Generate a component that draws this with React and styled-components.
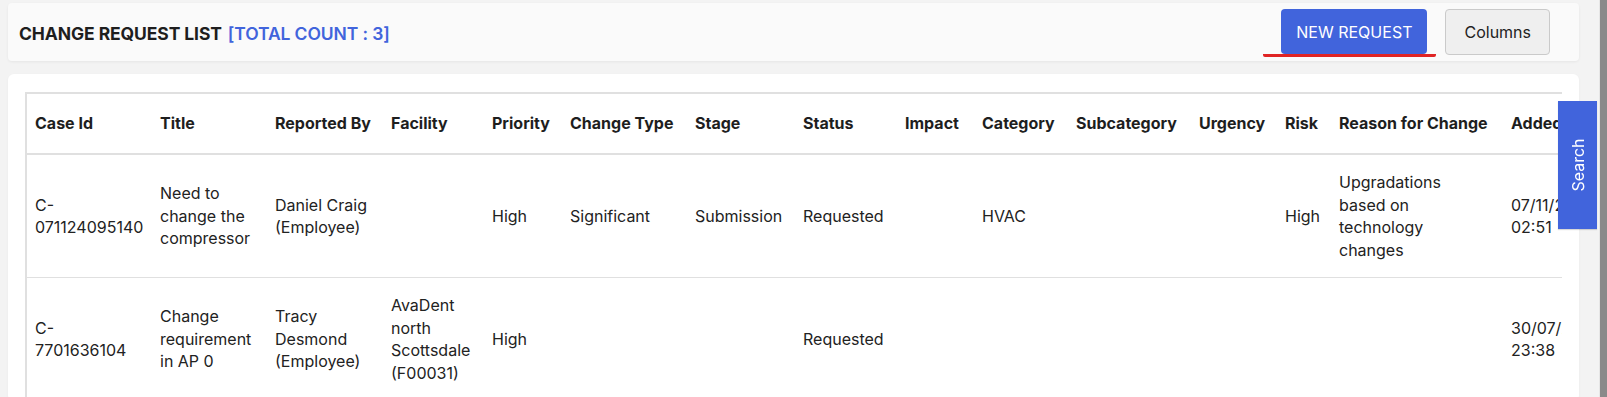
import React from 'react';
import styled, { createGlobalStyle } from 'styled-components';

const GlobalStyle = createGlobalStyle`
  html, body {
    margin: 0;
    padding: 0;
    background: #f3f3f3;
    overflow: hidden;
  }
  body {
    font-family: 'Inter', 'Liberation Sans', sans-serif;
    color: #222;
  }
`;

const Page = styled.div`
  display: flex;
  height: 100vh;
`;

const Main = styled.main`
  flex: 1;
  min-width: 0;
  padding: 3px 20px 0 8px;
  display: flex;
  flex-direction: column;
  gap: 13px;
`;

const ScrollTrack = styled.div`
  width: 7px;
  flex-shrink: 0;
  background: #8a8a8a;
  border-left: 1px solid #e6e6e6;
`;

const HeaderCard = styled.header`
  flex-shrink: 0;
  display: flex;
  align-items: flex-start;
  height: 58px;
  box-sizing: border-box;
  padding: 6px 29px 0 11px;
  background: #fafafa;
  border-radius: 4px;
  box-shadow: 0 1px 3px rgba(0, 0, 0, 0.06);
`;

const Title = styled.h1`
  flex: 1;
  margin: 0;
  align-self: center;
  margin-top: -3px;
  font-size: 17.5px;
  font-weight: 700;
  color: #1e1e1e;
  letter-spacing: -0.1px;
`;

const Count = styled.span`
  color: #4164dc;
  font-weight: 600;
  margin-left: 6px;
`;

const Actions = styled.div`
  display: flex;
  align-items: flex-start;
  gap: 9px;
`;

const Underlined = styled.div`
  padding: 0 9px 0 18px;
  border-bottom: 3px solid #e02424;
  border-radius: 2px;
`;

const Button = styled.button`
  height: ${p => (p.$primary ? '45px' : '46px')};
  padding: 0 ${p => (p.$primary ? '15px' : '18px')};
  font-family: inherit;
  font-size: 16px;
  border-radius: 4px;
  cursor: pointer;
  color: ${p => (p.$primary ? '#fff' : '#222')};
  background: ${p => (p.$primary ? '#4164dc' : '#efefef')};
  border: ${p => (p.$primary ? 'none' : '1px solid #cacaca')};
  display: block;
`;

const TableCard = styled.section`
  flex: 1;
  background: #fff;
  border-radius: 6px;
  padding: 18px 17px 0 17px;
  box-shadow: 0 1px 3px rgba(0, 0, 0, 0.04);
`;

const TableWrap = styled.div`
  overflow: hidden;
`;

const Table = styled.table`
  border-collapse: collapse;
  table-layout: fixed;
  width: 1700px;
  border-top: 2px solid #e0e0e0;
  border-left: 2px solid #e0e0e0;
`;

const Th = styled.th`
  text-align: left;
  font-size: 16px;
  font-weight: 700;
  line-height: 23px;
  padding: 18px 8px;
  white-space: nowrap;
  color: #1e1e1e;
  border-bottom: 2px solid #e0e0e0;
`;

const Td = styled.td`
  font-size: 16px;
  line-height: 22.5px;
  padding: 16px 8px;
  vertical-align: middle;
  color: #222;
  border-bottom: 1px solid #e0e0e0;
`;

const Line = styled.span`
  display: block;
  white-space: nowrap;
`;

const SearchTab = styled.button`
  position: fixed;
  right: 10px;
  top: 101px;
  width: 39px;
  height: 128px;
  padding: 0;
  border: none;
  background: #4164dc;
  color: #fff;
  font-family: inherit;
  font-size: 16px;
  display: flex;
  align-items: center;
  justify-content: center;
  box-shadow: 0 1px 1px rgba(0, 0, 0, 0.15);
  span {
    transform: rotate(-90deg);
    white-space: nowrap;
  }
`;

const columns = [
  { key: 'caseId', label: 'Case Id', width: 126 },
  { key: 'title', label: 'Title', width: 115 },
  { key: 'reportedBy', label: 'Reported By', width: 116 },
  { key: 'facility', label: 'Facility', width: 101 },
  { key: 'priority', label: 'Priority', width: 78 },
  { key: 'changeType', label: 'Change Type', width: 125 },
  { key: 'stage', label: 'Stage', width: 108 },
  { key: 'status', label: 'Status', width: 102 },
  { key: 'impact', label: 'Impact', width: 77 },
  { key: 'category', label: 'Category', width: 94 },
  { key: 'subcategory', label: 'Subcategory', width: 123 },
  { key: 'urgency', label: 'Urgency', width: 86 },
  { key: 'risk', label: 'Risk', width: 54 },
  { key: 'reason', label: 'Reason for Change', width: 172 },
  { key: 'addedOn', label: 'Added On', width: 120 },
  { key: 'updatedOn', label: 'Updated On', width: 103 },
];

const rows = [
  {
    caseId: ['C-', '071124095140'],
    title: ['Need to', 'change the', 'compressor'],
    reportedBy: ['Daniel Craig', '(Employee)'],
    facility: '',
    priority: 'High',
    changeType: 'Significant',
    stage: 'Submission',
    status: 'Requested',
    category: 'HVAC',
    risk: 'High',
    reason: ['Upgradations', 'based on', 'technology', 'changes'],
    addedOn: ['07/11/2024', '02:51'],
  },
  {
    caseId: ['C-', '7701636104'],
    title: ['Change', 'requirement', 'in AP 0'],
    reportedBy: ['Tracy', 'Desmond', '(Employee)'],
    facility: ['AvaDent', 'north', 'Scottsdale', '(F00031)'],
    priority: 'High',
    status: 'Requested',
    addedOn: ['30/07/2024', '23:38'],
  },
];

function CellText({ value }) {
  if (!value) return null;
  const lines = Array.isArray(value) ? value : [value];
  return lines.map((l, i) => <Line key={i}>{l}</Line>);
}

export default function App() {
  return (
    <>
      <GlobalStyle />
      <Page>
        <Main>
          <HeaderCard>
            <Title>
              CHANGE REQUEST LIST<Count>[TOTAL COUNT : 3]</Count>
            </Title>
            <Actions>
              <Underlined>
                <Button $primary>NEW REQUEST</Button>
              </Underlined>
              <Button>Columns</Button>
            </Actions>
          </HeaderCard>
          <TableCard>
            <TableWrap>
              <Table>
                <colgroup>
                  {columns.map(c => <col key={c.key} style={{ width: c.width }} />)}
                </colgroup>
                <thead>
                  <tr>
                    {columns.map(c => <Th key={c.key}>{c.label}</Th>)}
                  </tr>
                </thead>
                <tbody>
                  {rows.map((r, i) => (
                    <tr key={i}>
                      {columns.map(c => (
                        <Td key={c.key}><CellText value={r[c.key]} /></Td>
                      ))}
                    </tr>
                  ))}
                </tbody>
              </Table>
            </TableWrap>
          </TableCard>
        </Main>
        <ScrollTrack />
      </Page>
      <SearchTab><span>Search</span></SearchTab>
    </>
  );
}
